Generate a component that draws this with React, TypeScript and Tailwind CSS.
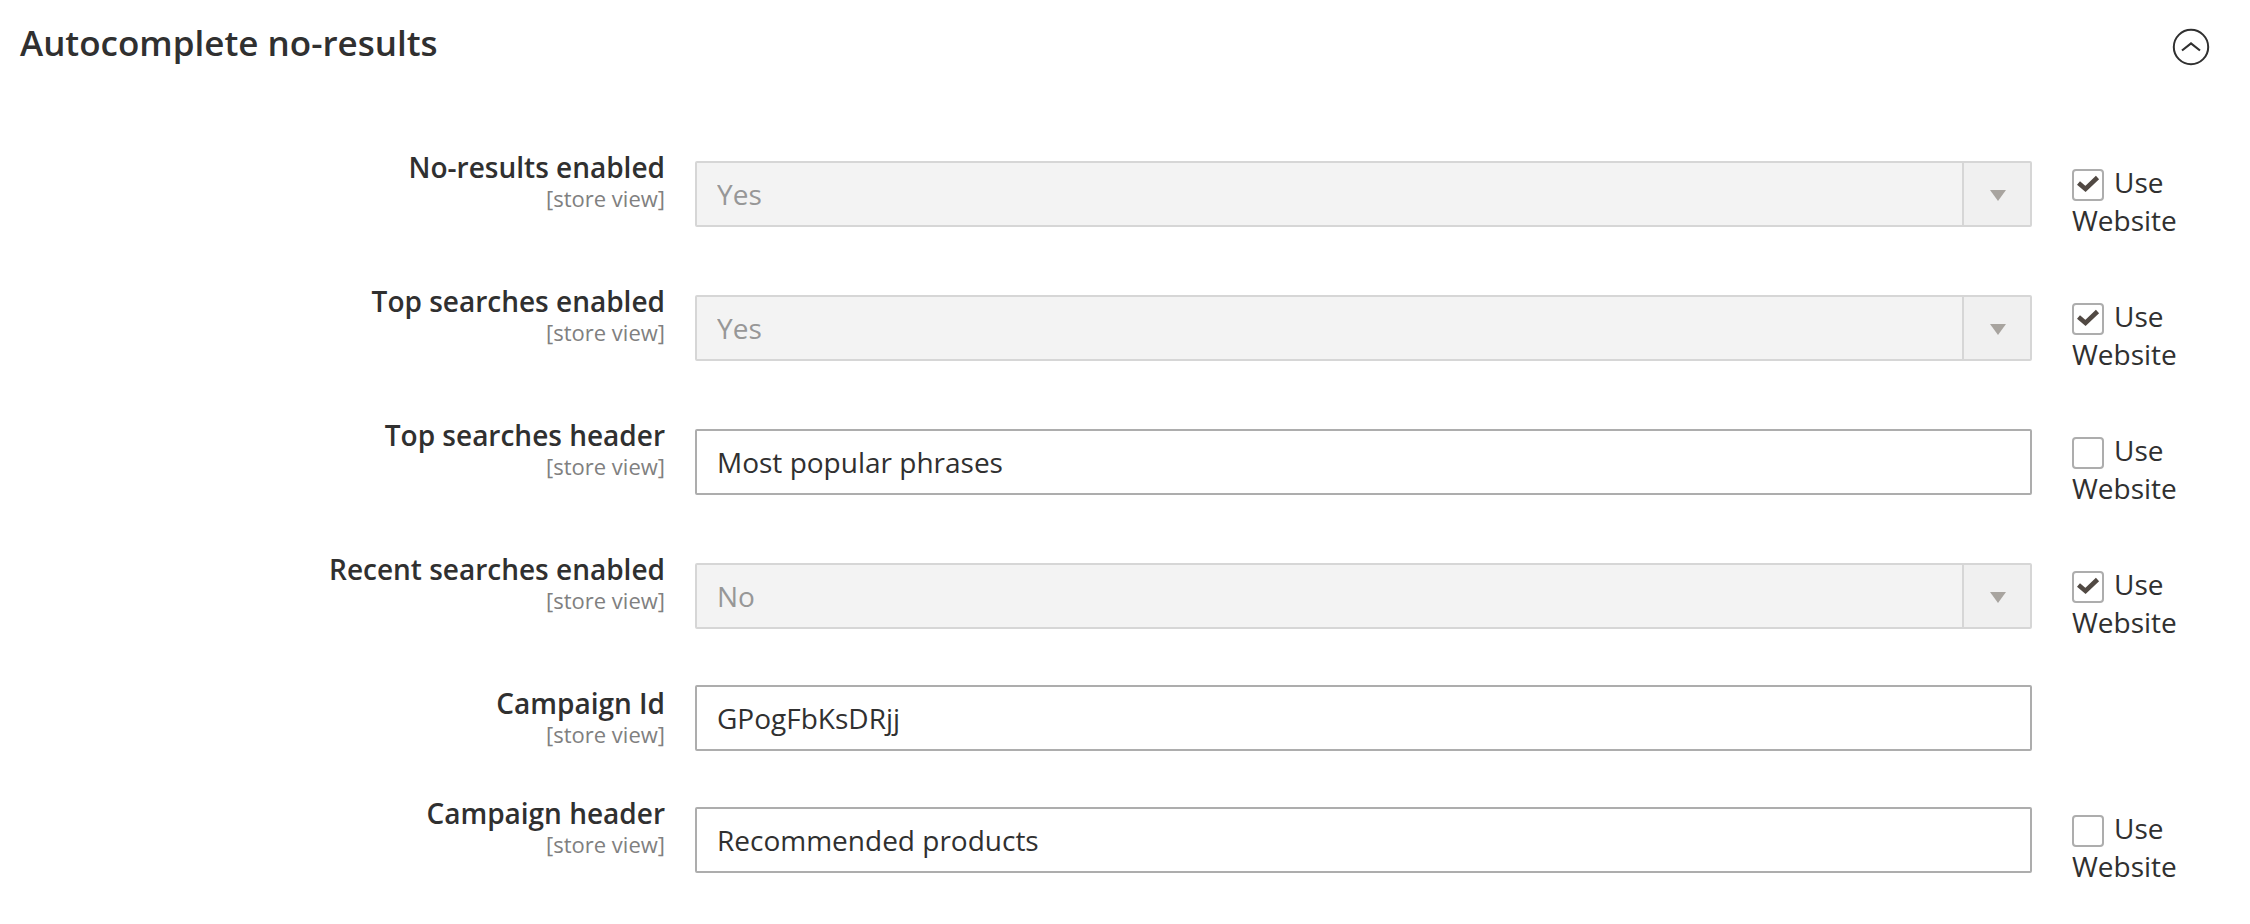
import { useState } from 'react'

interface Field {
  id: string
  label: string
  type: 'select' | 'text'
  value: string
  inherit?: boolean
}

const fields: Field[] = [
  { id: 'no_results_enabled', label: 'No-results enabled', type: 'select', value: 'Yes', inherit: true },
  { id: 'top_searches_enabled', label: 'Top searches enabled', type: 'select', value: 'Yes', inherit: true },
  { id: 'top_searches_header', label: 'Top searches header', type: 'text', value: 'Most popular phrases', inherit: false },
  { id: 'recent_searches_enabled', label: 'Recent searches enabled', type: 'select', value: 'No', inherit: true },
  { id: 'campaign_id', label: 'Campaign Id', type: 'text', value: 'GPogFbKsDRjj' },
  { id: 'campaign_header', label: 'Campaign header', type: 'text', value: 'Recommended products', inherit: false },
]

const control =
  'block w-full h-[66px] border-2 border-[#adadad] rounded-[2px] bg-white pl-5 text-[28px] text-[#303030] disabled:border-[#d6d6d6] disabled:bg-[#f3f3f3] disabled:text-[#979797] disabled:opacity-100'

function SelectControl({ id, value, disabled }: { id: string; value: string; disabled: boolean }) {
  return (
    <div className="relative">
      <select id={id} defaultValue={value} disabled={disabled} className={`${control} appearance-none pr-20`}>
        <option>Yes</option>
        <option>No</option>
      </select>
      <span className="pointer-events-none absolute inset-y-0.5 right-0.5 w-[68px] border-l-2 border-[#d6d6d6] bg-[#f0f0f0] flex items-center justify-center pl-0.5">
        <svg width="16" height="11" viewBox="0 0 16 11" className="mt-0.5">
          <path d="M0 0h16L8 11z" fill="#a8a49f" />
        </svg>
      </span>
    </div>
  )
}

function FieldRow({ field }: { field: Field }) {
  const [inherit, setInherit] = useState(field.inherit ?? false)
  const hasInherit = field.inherit !== undefined

  return (
    <div className="grid grid-cols-[675fr_1337fr_198fr] items-start pb-11">
      <label htmlFor={field.id} className="pr-[30px] text-right">
        <span className="block text-[28px] leading-[36px] font-semibold text-[#303030]">{field.label}</span>
        <span className="block text-[22px] leading-[26px] text-[#808080]">[store view]</span>
      </label>
      <div className={hasInherit ? 'pt-3' : ''}>
        {field.type === 'select' ? (
          <SelectControl id={field.id} value={field.value} disabled={inherit} />
        ) : (
          <input id={field.id} type="text" defaultValue={field.value} disabled={inherit} className={control} />
        )}
      </div>
      {hasInherit && (
        <label className="block pl-10 pt-3.5 text-[28px] leading-[38px] text-[#303030]">
          <span className="relative inline-block align-top size-8 mt-1.5 mr-2.5">
            <input
              type="checkbox"
              checked={inherit}
              onChange={(e) => setInherit(e.target.checked)}
              className="peer block size-8 appearance-none border-2 border-[#adadad] rounded-[4px] bg-white"
            />
            <svg
              viewBox="0 0 32 32"
              className="pointer-events-none absolute inset-0 hidden size-8 peer-checked:block"
            >
              <path d="M6.5 14 13.5 20 25.500 8.500" fill="none" stroke="#514943" strokeWidth="4.600" />
            </svg>
          </span>
          Use Website
        </label>
      )}
    </div>
  )
}

export default function App() {
  const [open, setOpen] = useState(true)

  return (
    <section className="bg-white px-5 font-['Open_Sans','Noto_Sans',sans-serif]">
      <div className="flex items-center justify-between pt-5 pr-5 pb-[75px]">
        <h2 className="text-[35px] leading-[54px] font-semibold text-[#303030] pb-1 -mt-1">Autocomplete no-results</h2>
        <button type="button" aria-label="Toggle section" aria-expanded={open} onClick={() => setOpen(!open)}>
          <svg width="38" height="38" viewBox="0 0 38 38" fill="none" stroke="#303030" strokeWidth="2">
            <circle cx="19" cy="19" r="17.200" />
            <path d="M10 22.500 19 15.500 28 22.500" strokeWidth="2.200" />
          </svg>
        </button>
      </div>
      {open && fields.map((field) => <FieldRow key={field.id} field={field} />)}
    </section>
  )
}
